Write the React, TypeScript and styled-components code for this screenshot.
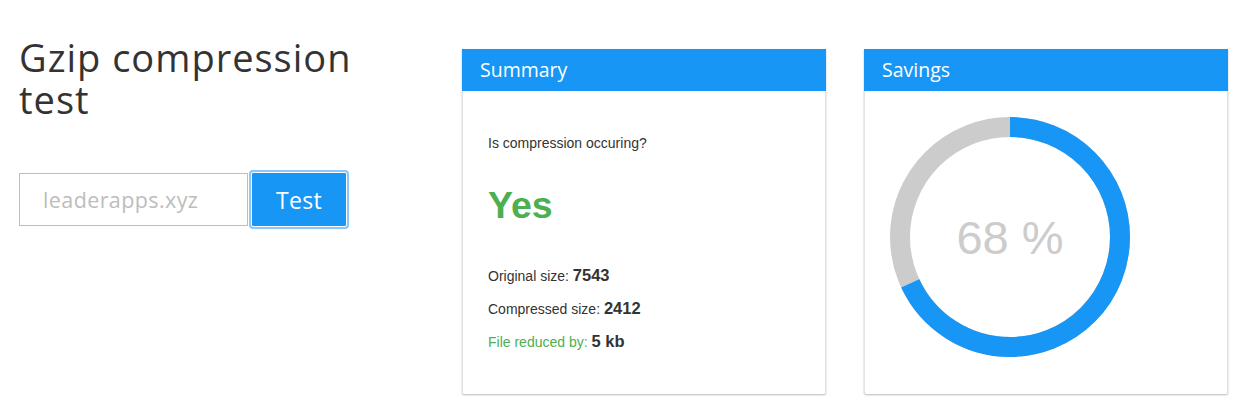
import React from "react";
import styled, { createGlobalStyle } from "styled-components";

const Global = createGlobalStyle`
  html, body { margin: 0; padding: 0; background: #fff; }
  body { font-family: "Open Sans", "Lato", sans-serif; color: #333; }
  * { box-sizing: border-box; }
`;

const BLUE = "#1796f6";
const GREEN = "#4caf50";
const DISPLAY = `"Open Sans", "Lato", sans-serif`;

const Page = styled.div`
  display: flex;
  align-items: flex-start;
  width: 1246px;
  height: 416px;
  padding: 0 0 0 19px;
`;

const LeftCol = styled.div`
  width: 443px;
  display: flex;
  flex-direction: column;
  padding-top: 36px;
`;

const Title = styled.h1`
  margin: 0;
  font-family: ${DISPLAY};
  font-weight: 400;
  font-size: 38px;
  line-height: 42px;
  color: #333;
  width: 370px;
  letter-spacing: 1px;
`;

const Form = styled.form`
  display: flex;
  align-items: center;
  margin-top: 52px;
  gap: 3px;
`;

const Input = styled.input`
  width: 229px;
  height: 53px;
  border: 1px solid #bdbdbd;
  padding: 0 0 0 23px;
  font-family: ${DISPLAY};
  font-size: 21.5px;
  letter-spacing: 0.4px;
  color: #333;
  outline: none;
  &::placeholder { color: #bdbdbd; }
`;

const Button = styled.button`
  width: 96px;
  height: 55px;
  background: ${BLUE};
  border: 1px solid #fff;
  color: #fff;
  font-family: ${DISPLAY};
  font-size: 23px;
  letter-spacing: 0.3px;
  box-shadow: 0 0 0 2px #8cc7fa;
  border-radius: 2px;
  padding: 0;
`;

const Cards = styled.div`
  display: flex;
  gap: 38px;
  padding-top: 49px;
`;

const Card = styled.section<{ $height: number }>`
  width: 364px;
  height: ${(p) => p.$height}px;
  background: #fff;
  border-left: 1px solid #e3e3e3;
  border-right: 1px solid #e3e3e3;
  box-shadow: 0 1px 2px rgba(0, 0, 0, 0.28);
  border-radius: 0 0 2px 2px;
  display: flex;
  flex-direction: column;
`;

const CardHeader = styled.header`
  height: 42px;
  background: ${BLUE};
  color: #fff;
  font-family: ${DISPLAY};
  font-size: 19.5px;
  line-height: 42px;
  padding-left: 18px;
  margin: 0 -1px;
`;

const SummaryBody = styled.div`
  padding: 44px 0 0 25px;
  font-family: "Liberation Sans", Arial, sans-serif;
  color: #333;
`;

const Question = styled.p`
  margin: 0;
  font-size: 14px;
  line-height: 16px;
`;

const Answer = styled.div`
  margin-top: 32px;
  font-size: 37.5px;
  font-weight: 700;
  color: ${GREEN};
  line-height: 44px;
`;

const Stats = styled.div`
  margin-top: 38px;
  display: flex;
  flex-direction: column;
  gap: 12px;
`;

const Stat = styled.p<{ $green?: boolean }>`
  margin: 0;
  font-size: 14px;
  line-height: 20px;
  color: ${(p) => (p.$green ? GREEN : "#333")};
`;

const Value = styled.b`
  font-size: 16.5px;
  color: #333;
`;

const SavingsBody = styled.div`
  flex: 1;
  position: relative;
  display: flex;
  align-items: flex-start;
  padding: 26px 0 0 25px;
`;

const Donut = styled.svg`
  display: block;
`;

const Percent = styled.div`
  position: absolute;
  left: 25px;
  top: 26px;
  width: 240px;
  height: 240px;
  display: flex;
  align-items: center;
  justify-content: center;
  font-family: "Liberation Sans", Arial, sans-serif;
  font-size: 47px;
  color: #cccccc;
`;

export default function App() {
  const pct = 68;
  const r = 110;
  const c = 2 * Math.PI * r;
  return (
    <>
      <Global />
      <Page>
        <LeftCol>
          <Title>Gzip compression test</Title>
          <Form onSubmit={(e) => e.preventDefault()}>
            <Input placeholder="leaderapps.xyz" />
            <Button type="submit">Test</Button>
          </Form>
        </LeftCol>
        <Cards>
          <Card $height={345}>
            <CardHeader>Summary</CardHeader>
            <SummaryBody>
              <Question>Is compression occuring?</Question>
              <Answer>Yes</Answer>
              <Stats>
                <Stat>
                  Original size: <Value>7543</Value>
                </Stat>
                <Stat>
                  Compressed size: <Value>2412</Value>
                </Stat>
                <Stat $green>
                  File reduced by: <Value>5 kb</Value>
                </Stat>
              </Stats>
            </SummaryBody>
          </Card>
          <Card $height={345}>
            <CardHeader>Savings</CardHeader>
            <SavingsBody>
              <Donut width="240" height="240" viewBox="0 0 240 240">
                <circle cx="120" cy="120" r={r} fill="none" stroke="#cccccc" strokeWidth="20" />
                <circle
                  cx="120"
                  cy="120"
                  r={r}
                  fill="none"
                  stroke={BLUE}
                  strokeWidth="20"
                  strokeDasharray={`${(c * pct) / 100} ${c}`}
                  transform="rotate(-90 120 120)"
                />
              </Donut>
              <Percent>{pct} %</Percent>
            </SavingsBody>
          </Card>
        </Cards>
      </Page>
    </>
  );
}
